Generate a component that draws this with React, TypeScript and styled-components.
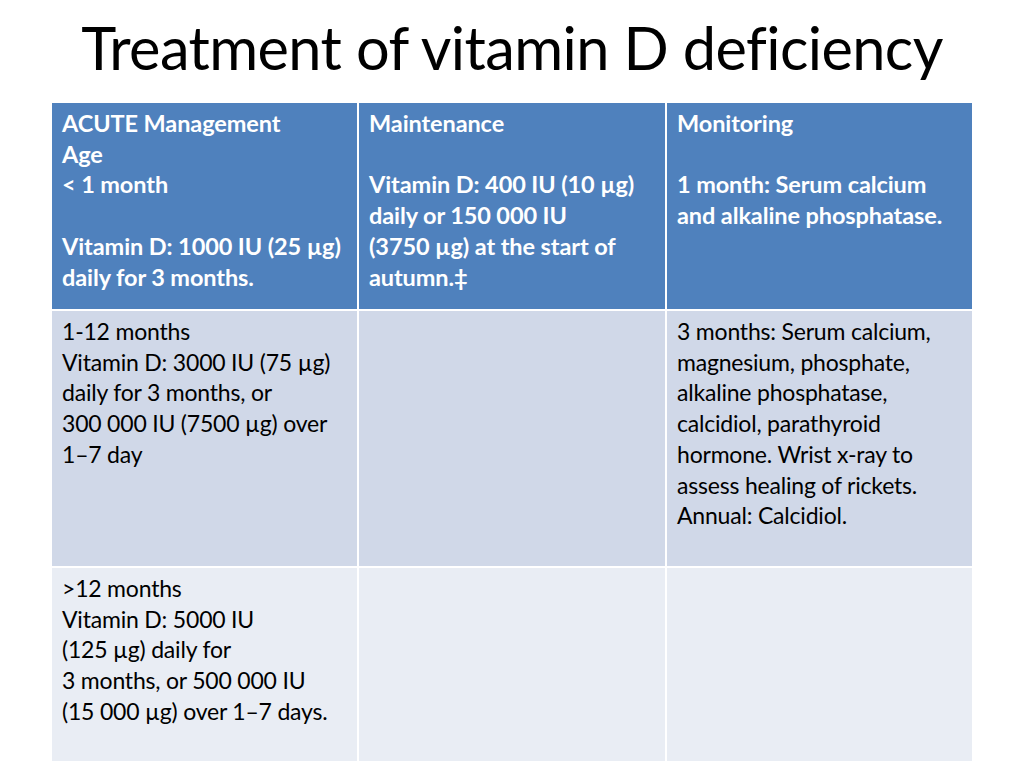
import React from "react";
import styled, { createGlobalStyle } from "styled-components";

const Global = createGlobalStyle`
  html, body { margin: 0; padding: 0; background: #ffffff; }
  body { font-family: "Lato", "Open Sans", sans-serif; }
`;

const Slide = styled.div`
  width: 1024px;
  height: 768px;
  background: #ffffff;
  display: flex;
  flex-direction: column;
  align-items: center;
  overflow: hidden;
`;

const Title = styled.h1`
  margin: 0;
  padding-top: 11px;
  height: 89px;
  box-sizing: border-box;
  font-family: "Lato", sans-serif;
  font-weight: 400;
  font-size: 59.5px;
  line-height: 72px;
  letter-spacing: -0.6px;
  color: #000000;
  text-align: center;
  white-space: nowrap;
`;

const Table = styled.div`
  margin-top: 14px;
  display: grid;
  grid-template-columns: 305px 306px 305px;
  grid-template-rows: 206px 255px 193px;
  column-gap: 2px;
  row-gap: 2px;
  background: #ffffff;
`;

type Band = "head" | "odd" | "even";

const bg: Record<Band, string> = {
  head: "#4f81bd",
  odd: "#d0d8e8",
  even: "#e9edf4",
};

const Cell = styled.div<{ $band: Band }>`
  background: ${(p) => bg[p.$band]};
  color: ${(p) => (p.$band === "head" ? "#ffffff" : "#000000")};
  font-weight: ${(p) => (p.$band === "head" ? 700 : 400)};
  font-family: "Lato", sans-serif;
  font-size: ${(p) => (p.$band === "head" ? "23.5px" : "23px")};
  letter-spacing: ${(p) => (p.$band === "head" ? "-0.1px" : "-0.2px")};
  line-height: 30.7px;
  padding: 5px 6px 0 10px;
  box-sizing: border-box;
  white-space: nowrap;
`;

const Line = styled.div`
  min-height: 30.7px;
`;

const rows: { band: Band; cells: string[][] }[] = [
  {
    band: "head",
    cells: [
      ["ACUTE Management", "Age", "< 1 month", "", "Vitamin D: 1000 IU (25 µg)", "daily for 3 months."],
      ["Maintenance", "", "Vitamin D: 400 IU (10 µg)", "daily or 150 000 IU", "(3750 µg) at the start of", "autumn.‡"],
      ["Monitoring", "", "1 month: Serum calcium", "and alkaline phosphatase."],
    ],
  },
  {
    band: "odd",
    cells: [
      ["1-12 months", "Vitamin D: 3000 IU (75 µg)", "daily for 3 months, or", "300 000 IU (7500 µg) over", "1–7 day"],
      [],
      [
        "3 months: Serum calcium,",
        "magnesium, phosphate,",
        "alkaline phosphatase,",
        "calcidiol, parathyroid",
        "hormone. Wrist x-ray to",
        "assess healing of rickets.",
        "Annual: Calcidiol.",
      ],
    ],
  },
  {
    band: "even",
    cells: [
      [">12 months", "Vitamin D: 5000 IU", "(125 µg) daily for", "3 months, or 500 000 IU", "(15 000 µg) over 1–7 days."],
      [],
      [],
    ],
  },
];

export default function App() {
  return (
    <Slide>
      <Global />
      <Title>Treatment of vitamin D deficiency</Title>
      <Table>
        {rows.map((r, ri) =>
          r.cells.map((lines, ci) => (
            <Cell key={`${ri}-${ci}`} $band={r.band}>
              {lines.map((l, li) => (
                <Line key={li}>{l}</Line>
              ))}
            </Cell>
          ))
        )}
      </Table>
    </Slide>
  );
}
